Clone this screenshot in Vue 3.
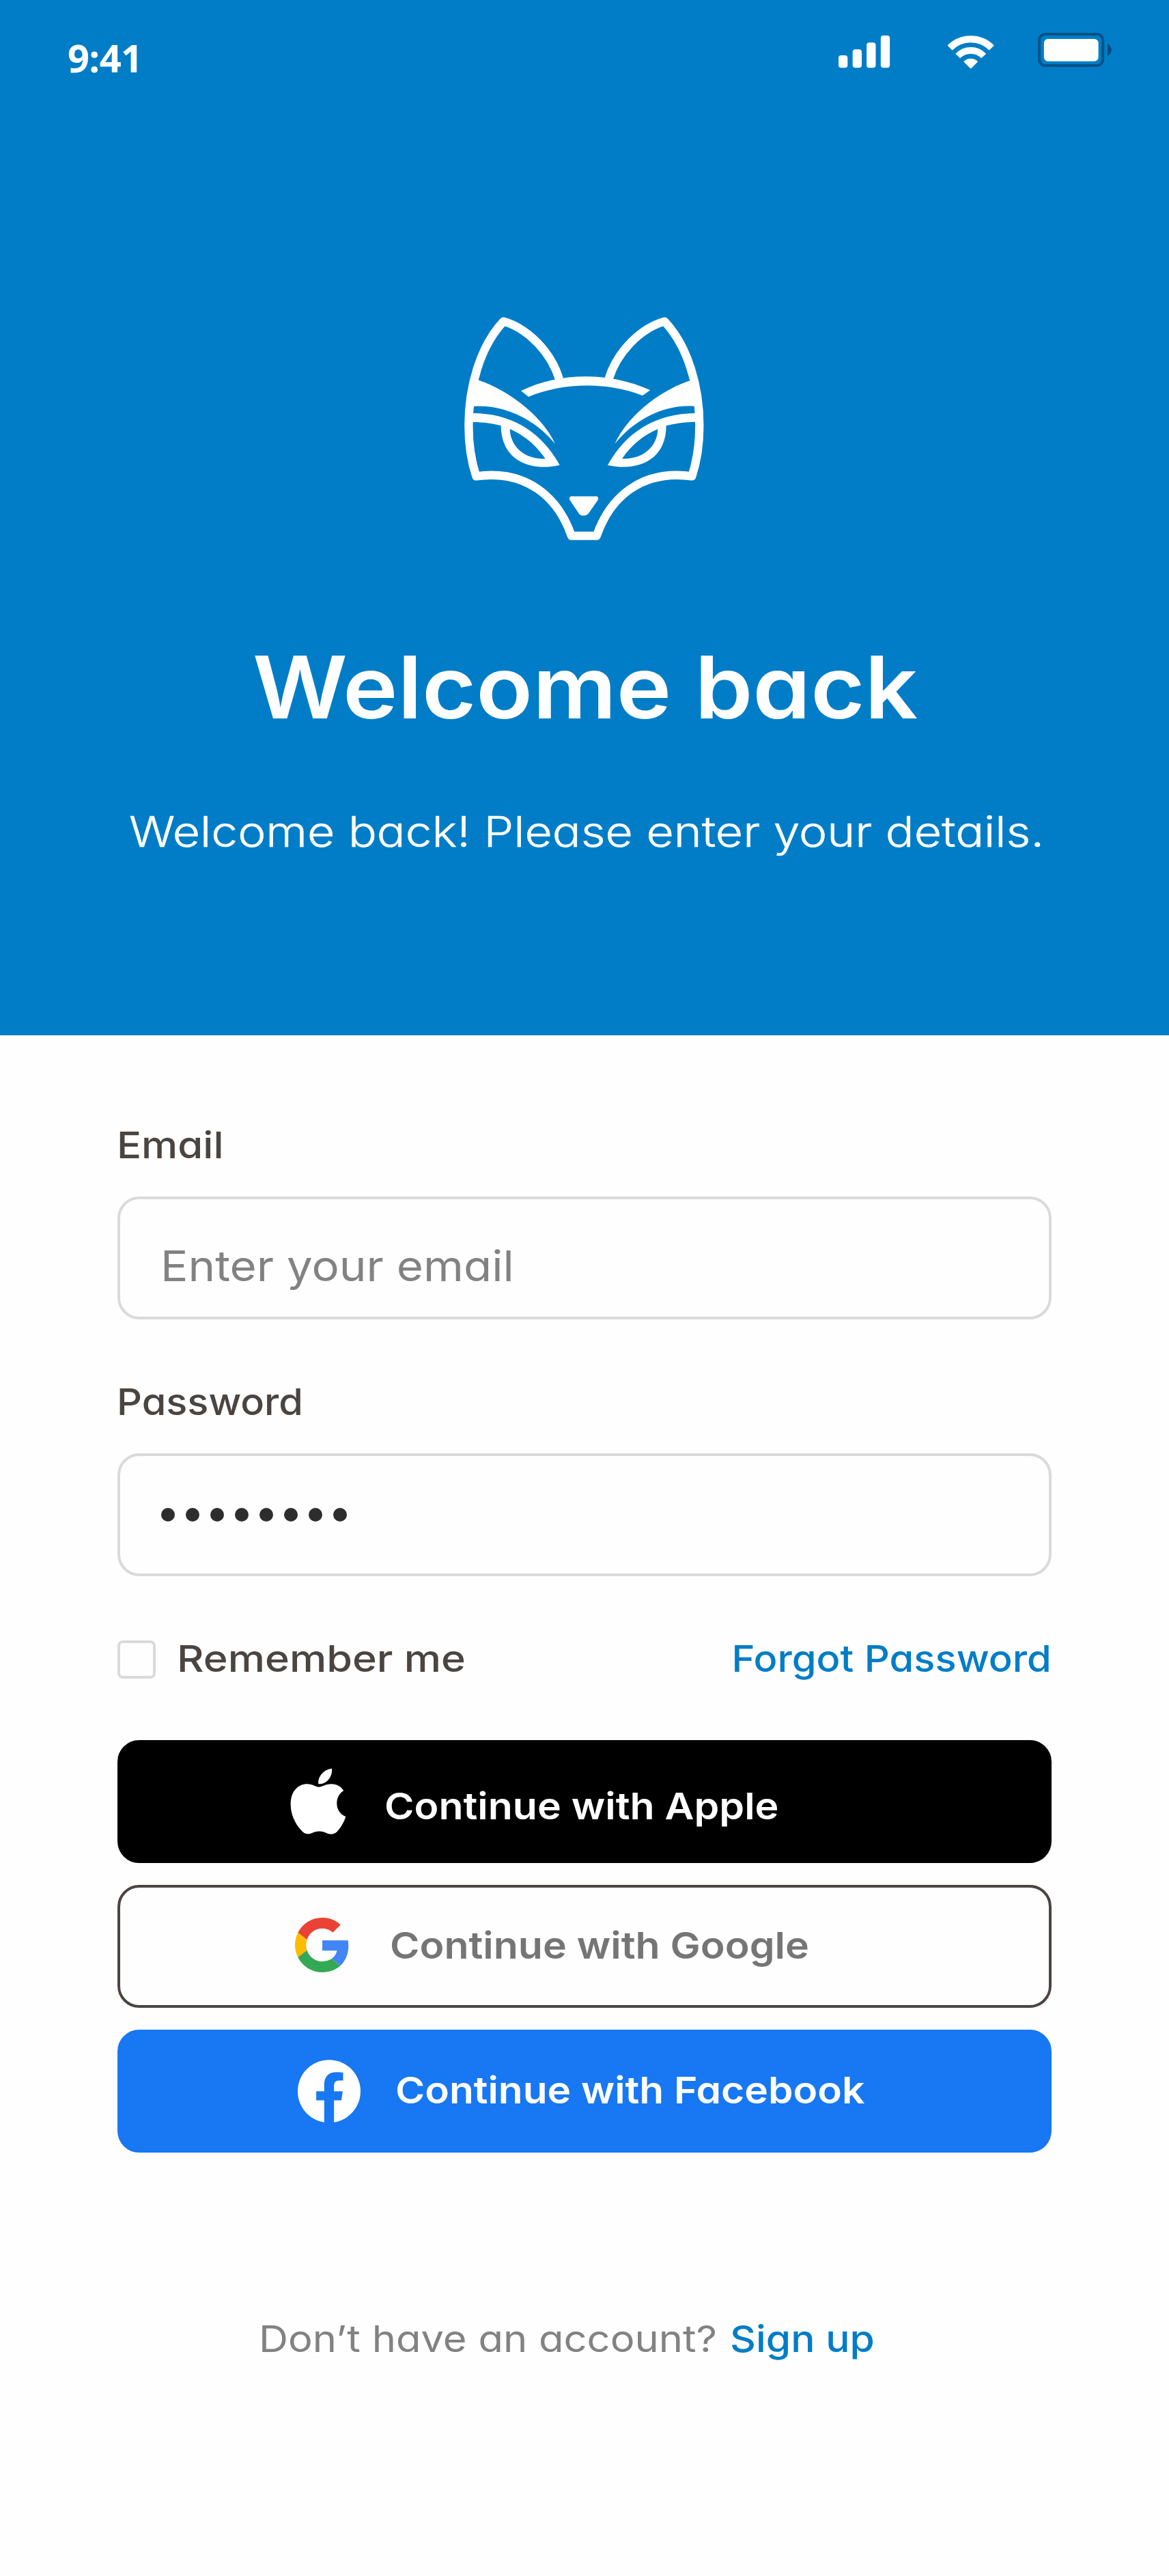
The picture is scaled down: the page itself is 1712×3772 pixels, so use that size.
<script setup>
const dots = 8
</script>

<template>
  <main class="screen">
    <header class="hero">
      <div class="status">
        <span class="time">9:41</span>
        <svg class="signal" viewBox="84 45 228 180" fill="#fff">
          <rect x="84" y="153" width="40" height="55" rx="12" />
          <rect x="146" y="127" width="40" height="81" rx="12" />
          <rect x="207.500" y="97" width="40" height="111" rx="12" />
          <rect x="269.500" y="66" width="40" height="142" rx="12" />
        </svg>
        <svg class="wifi" viewBox="561 45 207 180" fill="#fff" stroke="#fff" stroke-width="4" stroke-linejoin="round">
          <path d="M565.500 109A142 142 0 0 1 764.500 109L746 127.500A116 116 0 0 0 584 127.500Z" transform="translate(0 .5)" />
          <path d="M601 146A90 90 0 0 1 729.500 146L712 163A68 68 0 0 0 618 163Z" />
          <path d="M636.500 180.500A41 41 0 0 1 693.500 180.500L665 209Z" />
        </svg>
        <svg class="battery" viewBox="960 45 324 180">
          <rect x="966" y="60" width="279.500" height="138" rx="27" fill="none" stroke="#005286" stroke-width="12" />
          <rect x="986.500" y="81" width="239.500" height="98" rx="18" fill="#fff" />
          <path d="M1266 102Q1283 112 1283 129T1266 156Z" fill="#004a78" />
        </svg>
      </div>

      <svg class="fox" viewBox="0 0 1170 1080" fill="none" stroke="#fff" stroke-width="37" stroke-linejoin="round">
        <path d="M477 315C440 195 338 92 232 62C130 170 79 350 79 520C79 600 90 675 112 742C330 712 470 830 531 1004H641C702 830 842 712 1060 742C1082 675 1093 600 1093 520C1093 350 1042 170 940 62C834 92 732 195 695 313" />
        <g fill="#fff" stroke="none" fill-rule="evenodd">
          <path d="M309 367C480 283 700 283 877 364L843 388C690 328 500 328 342 393Z" />
          <path d="M123 320C270 370 410 490 459 600C370 490 230 425 102 435L80 440L90 320Z" />
          <path d="M1047 323C900 374 770 490 721 600C800 500 930 425 1068 434L1095 440L1082 320Z" />
          <path d="M85 465C270 462 400 550 479 693C360 722 222 680 221 520Q165 504 85 503ZM260 535C320 560 375 605 416 665C330 670 262 615 260 535Z" />
          <path d="M1087 465C902 462 769 550 690 693C809 722 947 680 947 520Q1007 504 1087 503ZM910 535C850 560 794 605 753 665C840 670 908 615 910 535Z" />
          <path d="M531 830H639Q653 832 647 846L607 904Q600 915 585 915Q569 915 563 905L523 846Q517 832 531 830Z" />
        </g>
      </svg>

      <h1>Welcome back</h1>
      <p class="lead">Welcome back! Please enter your details.</p>
    </header>

    <form class="form" @submit.prevent>
      <div class="field">
        <label class="label email">Email</label>
        <div class="box"><span class="placeholder">Enter your email</span></div>
      </div>
      <div class="field">
        <label class="label">Password</label>
        <div class="box secret"><i v-for="n in dots" :key="n" class="dot"></i></div>
      </div>
      <div class="options">
        <span class="check"></span>
        <span class="remember">Remember me</span>
        <a class="forgot">Forgot Password</a>
      </div>

      <div class="providers">
        <button class="btn apple">
          <svg viewBox="75 88 246 291" fill="#fff">
            <path d="M258 90C262 125 235 160 199 158C194 125 225 92 258 90Z" />
            <path d="M200 171C215 171 230 158 256 158C280 158 298 170 310 187C292 198 280 217 280 243C280 272 297 292 319 301C312 325 297 350 281 367C268 380 253 380 238 375C213 363 193 363 170 374C150 381 138 378 124 362C95 330 77 290 77 246C77 190 110 158 150 158C172 158 188 171 200 171Z" />
          </svg>
          <span>Continue with Apple</span>
        </button>
        <button class="btn google">
          <svg viewBox="0 0 48 48">
            <path fill="#EA4335" d="M24 9.500c3.540 0 6.710 1.220 9.210 3.600l6.850-6.850C35.900 2.380 30.470 0 24 0 14.620 0 6.510 5.380 2.560 13.220l7.980 6.190C12.430 13.720 17.740 9.500 24 9.500z" />
            <path fill="#4285F4" d="M46.980 24.550c0-1.570-.150-3.090-.380-4.550H24v9.020h12.940c-.580 2.960-2.260 5.480-4.780 7.180l7.730 6c4.510-4.180 7.090-10.360 7.090-17.650z" />
            <path fill="#FBBC05" d="M10.530 28.590c-.480-1.450-.760-2.990-.760-4.590s.270-3.140.760-4.590l-7.980-6.190C.920 16.460 0 20.120 0 24c0 3.880.920 7.540 2.560 10.780l7.970-6.190z" />
            <path fill="#34A853" d="M24 48c6.480 0 11.930-2.130 15.890-5.810l-7.730-6c-2.150 1.450-4.920 2.300-8.160 2.300-6.260 0-11.570-4.220-13.470-9.910l-7.980 6.190C6.510 42.620 14.620 48 24 48z" />
          </svg>
          <span>Continue with Google</span>
        </button>
        <button class="btn facebook">
          <svg viewBox="0 0 24 24" fill="#fff">
            <path d="M24 12.073c0-6.627-5.373-12-12-12s-12 5.373-12 12c0 5.990 4.388 10.954 10.125 11.854v-8.385H7.078v-3.470h3.047V9.430c0-3.007 1.792-4.669 4.533-4.669 1.312 0 2.686.235 2.686.235v2.953H15.830c-1.491 0-1.956.925-1.956 1.874v2.250h3.328l-.532 3.470h-2.796v8.385C19.612 23.027 24 18.062 24 12.073z" />
          </svg>
          <span>Continue with Facebook</span>
        </button>
      </div>
    </form>

    <footer class="signup">
      <span class="ask">Don’t have an account?</span>
      <a class="link">Sign up</a>
    </footer>
  </main>
</template>

<style>
body {
  margin: 0;
  background: #fefefe;
}
</style>

<style scoped>
.screen {
  width: 1712px;
  height: 3772px;
  overflow: hidden;
  background: #fefefe;
  font-family: "Inter", "Liberation Sans", sans-serif;
  font-feature-settings: "cv11";
  font-size: 54px;
  line-height: 85px;
  white-space: nowrap;
}
svg {
  display: block;
  flex: none;
}

h1,
.lead,
.label,
.placeholder,
.remember,
.btn span,
.ask,
.link {
  transform-origin: 0 0;
}

/* Header */
.hero {
  height: 1516px;
  background: #007dc6;
  color: #fff;
  display: flex;
  flex-direction: column;
  align-items: flex-start;
}
.status {
  box-sizing: border-box;
  width: 100%;
  height: 450px;
  padding: 45px 84px 0 99px;
  display: flex;
  align-items: flex-start;
}
.time {
  margin: 1px auto 0 0;
  font: 700 56px/76px "Open Sans", "Noto Sans", sans-serif;
  letter-spacing: -0.67px;
}
.signal {
  width: 76px;
  height: 60px;
}
.wifi {
  width: 69px;
  height: 60px;
  margin: 0 64px 0 83px;
}
.battery {
  width: 108px;
  height: 60px;
}
.fox {
  width: 390px;
  height: 360px;
  margin-left: 660px;
}
h1 {
  margin: 100px 0 0 370px;
  font-size: 126px;
  font-weight: 600;
  line-height: 193px;
  transform: scaleX(1.08);
}
.lead {
  margin: 66px 0 0 188.5px;
  font-size: 62px;
  font-weight: 300;
  line-height: 97px;
  -webkit-text-stroke: 0.5px #fff;
  transform: scaleX(1.122);
}

/* Form */
.form {
  padding: 118px 172px 0;
}
.field {
  margin-bottom: 78px;
}
.label {
  display: block;
  margin: 0 0 33px -1px;
  color: #4b4542;
  font-weight: 500;
  transform: scaleX(1.068);
}
.label.email {
  transform: scaleX(1.109);
}
.box {
  box-sizing: border-box;
  height: 180px;
  padding: 49px 0 0 59px;
  border: 4px solid #dadada;
  border-radius: 32px;
}
.placeholder {
  display: block;
  color: #828282;
  font-size: 62px;
  line-height: 97px;
  transform: scaleX(1.085);
}
.box.secret {
  padding: 0 0 0 60px;
  display: flex;
  align-items: center;
  gap: 16px;
}
.dot {
  width: 20px;
  height: 20px;
  border-radius: 50%;
  background: #2d2d2d;
}
.options {
  display: flex;
  align-items: flex-start;
  font-weight: 500;
}
.check {
  box-sizing: border-box;
  width: 56px;
  height: 56px;
  margin: 16px 31px 0 0;
  border: 4px solid #dadada;
  border-radius: 8px;
}
.remember {
  color: #4b4542;
  transform: scaleX(1.132);
}
.forgot {
  margin-left: auto;
  color: #007dc6;
  transform: scaleX(1.0724);
  transform-origin: 100% 0;
}

/* Sign-in providers */
.providers {
  margin-top: 77px;
  display: flex;
  flex-direction: column;
  gap: 32px;
}
.btn {
  box-sizing: border-box;
  height: 180px;
  margin: 0;
  padding: 0;
  border: 4px solid transparent;
  border-radius: 32px;
  display: flex;
  align-items: flex-start;
  font: inherit;
  font-feature-settings: inherit;
  font-weight: 600;
  color: #fff;
}
.btn span {
  margin-top: 42px;
  transform: scaleX(1.0925);
}
.apple {
  background: #000;
  border-color: #000;
}
.apple svg {
  width: 82px;
  height: 97px;
  margin: 37px 56px 0 249px;
}
.apple span {
  margin-top: 50px;
}
.google {
  background: #fefefe;
  border-color: #4b4542;
  color: #757575;
}
.google svg {
  width: 80px;
  height: 80px;
  margin: 44px 59px 0 256px;
}
.facebook {
  background: #1877f2;
  border-color: #1877f2;
}
.facebook svg {
  width: 92px;
  height: 92px;
  margin: 40px 51px 0 260px;
}
.facebook span {
  transform: scaleX(1.0855);
}

/* Footer */
.signup {
  margin-top: 230px;
  padding-left: 379px;
  display: flex;
  gap: 82.5px;
}
.ask {
  color: #828282;
  transform: scaleX(1.105);
}
.link {
  color: #007dc6;
  font-weight: 500;
  transform: scaleX(1.088);
}
</style>
